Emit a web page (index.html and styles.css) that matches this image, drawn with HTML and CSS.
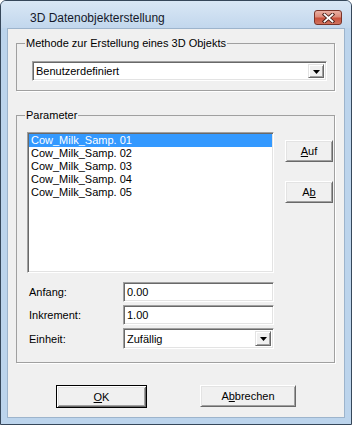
FILE: index.html
```html
<!DOCTYPE html>
<html lang="de">
<head>
    <meta charset="UTF-8">
    <meta name="viewport" content="width=device-width, initial-scale=1.0">
    <title>3D Datenobjekterstellung</title>
    <link rel="stylesheet" href="styles.css">
</head>
<body>
    <!-- Dialogfenster -->
    <div class="window">
        <div class="titlebar">
            <span class="title">3D Datenobjekterstellung</span>
            <button class="close" aria-label="Schließen">
                <svg width="13" height="10" viewBox="0 0 13 10">
                    <path d="M2.5 1.5 L10.5 8.5 M10.5 1.5 L2.5 8.5" stroke="#4a2019" stroke-width="3.6" stroke-linecap="square" fill="none"/>
                    <path d="M2.5 1.5 L10.5 8.5 M10.5 1.5 L2.5 8.5" stroke="#ffffff" stroke-width="1.8" stroke-linecap="square" fill="none"/>
                </svg>
            </button>
        </div>

        <div class="client">
            <!-- Methode -->
            <fieldset class="group group-method">
                <legend>Methode zur Erstellung eines 3D Objekts</legend>
                <div class="combo combo-method">
                    <span class="combo-text">Benutzerdefiniert</span>
                    <span class="drop">
                        <svg width="7" height="4" viewBox="0 0 7 4"><polygon points="0,0 7,0 3.5,4" fill="#000"/></svg>
                    </span>
                </div>
            </fieldset>

            <!-- Parameter -->
            <fieldset class="group group-params">
                <legend>Parameter</legend>
                <div class="list-row">
                    <ul class="listbox">
                        <li class="selected">Cow_Milk_Samp. 01</li>
                        <li>Cow_Milk_Samp. 02</li>
                        <li>Cow_Milk_Samp. 03</li>
                        <li>Cow_Milk_Samp. 04</li>
                        <li>Cow_Milk_Samp. 05</li>
                    </ul>
                    <div class="side-buttons">
                        <button class="btn btn-small"><u>A</u>uf</button>
                        <button class="btn btn-small">A<u>b</u></button>
                    </div>
                </div>

                <div class="fields">
                    <label>Anfang:</label>
                    <div class="edit">0.00</div>
                    <label>Inkrement:</label>
                    <div class="edit">1.00</div>
                    <label>Einheit:</label>
                    <div class="combo combo-unit">
                        <span class="combo-text">Zufällig</span>
                        <span class="drop">
                            <svg width="7" height="4" viewBox="0 0 7 4"><polygon points="0,0 7,0 3.5,4" fill="#000"/></svg>
                        </span>
                    </div>
                </div>
            </fieldset>

            <!-- Dialogschaltflächen -->
            <div class="dialog-buttons">
                <button class="btn btn-ok default"><u>O</u>K</button>
                <button class="btn btn-cancel">A<u>b</u>brechen</button>
            </div>
        </div>
    </div>
</body>
</html>
```

FILE: styles.css
```css
/* Grundstil */
* {
    box-sizing: border-box;
}
body {
    margin: 0;
    background: #ffffff;
    font-family: "Liberation Sans", Arial, sans-serif;
    font-size: 11px;
    color: #000;
}

/* Fensterrahmen */
.window {
    width: 352px;
    height: 425px;
    border: 1px solid #36475a;
    border-radius: 6px 6px 0 0;
    background: #bcd4ec;
    display: flex;
    flex-direction: column;
}
.titlebar {
    height: 27px;
    display: flex;
    align-items: flex-start;
    padding: 0 9px 0 29px;
    border-radius: 5px 5px 0 0;
    background: linear-gradient(#d9e7f5, #c2d7ed);
}
.title {
    flex: 1;
    margin-top: 10px;
    font-size: 12px;
    line-height: 14px;
    color: #14182a;
}
.close {
    margin-top: 9px;
    width: 28px;
    height: 15px;
    padding: 0;
    border: 1px solid #7a3328;
    border-radius: 3px;
    background: linear-gradient(#eab0a3 0%, #dc8b7a 45%, #c9503b 55%, #d0735f 100%);
    display: flex;
    align-items: center;
    justify-content: center;
}
.close svg {
    display: block;
}

/* Client-Bereich */
.client {
    flex: 1;
    margin: 0 6px 6px;
    border: 1px solid #9db4cc;
    background: #f0f0f0;
    padding-top: 8px;
}

/* Gruppenrahmen */
.group {
    margin: 0 9px 0 8px;
    padding: 0;
    width: 319px;
    min-width: 0;
    border: 1px solid #a0a0a0;
    box-shadow: 1px 1px 0 #ffffff;
}
.group legend {
    margin-left: 8px;
    padding: 0 1px;
    line-height: 13px;
}
.group-method {
    padding: 11px 0 9px;
}
.group-params {
    margin-top: 18px;
    padding: 10px 0 13px;
}

/* Eingabefelder (vertieft) */
.edit,
.combo,
.listbox {
    background: #ffffff;
    border: 1px solid;
    border-color: #a0a0a0 #ffffff #ffffff #a0a0a0;
    box-shadow: inset 1px 1px 0 #696969, inset -1px -1px 0 #e3e3e3;
}
.edit {
    height: 20px;
    padding: 0 3px;
    line-height: 18px;
}
.combo {
    display: flex;
    align-items: center;
    padding: 2px 2px 2px 3px;
}
.combo-text {
    flex: 1;
}
.combo-method {
    margin-left: 15px;
    width: 295px;
    height: 20px;
}
.combo-unit {
    height: 21px;
}
.drop {
    width: 16px;
    height: 100%;
    display: flex;
    align-items: center;
    justify-content: center;
    background: #f0f0f0;
    border: 1px solid;
    border-color: #e3e3e3 #696969 #696969 #e3e3e3;
    box-shadow: inset 1px 1px 0 #ffffff, inset -1px -1px 0 #a0a0a0;
}
.drop svg {
    display: block;
    margin-top: 1px;
}

/* Liste */
.list-row {
    display: flex;
    align-items: flex-start;
}
.listbox {
    list-style: none;
    margin: 0 0 0 10px;
    padding: 1px;
    width: 247px;
    height: 141px;
}
.listbox li {
    height: 13px;
    line-height: 13px;
    padding-left: 2px;
    white-space: nowrap;
}
.listbox li.selected {
    background: #3399ff;
    color: #ffffff;
}
.side-buttons {
    margin-left: 11px;
    padding-top: 8px;
    display: flex;
    flex-direction: column;
    gap: 19px;
}

/* Felder */
.fields {
    margin: 9px 0 0 12px;
    display: grid;
    grid-template-columns: 94px 151px;
    row-gap: 3px;
    align-items: center;
}

/* Schaltflächen */
.btn {
    font-family: "Liberation Sans", Arial, sans-serif;
    font-size: 11px;
    color: #000;
    background: #f0f0f0;
    padding: 0;
    border: 1px solid;
    border-color: #ffffff #696969 #696969 #ffffff;
    box-shadow: inset 1px 1px 0 #e3e3e3, inset -1px -1px 0 #a0a0a0;
}
.btn-small {
    width: 48px;
    height: 22px;
}
.btn.default {
    border: 1px solid #000;
    box-shadow: inset 1px 1px 0 #ffffff, inset -1px -1px 0 #696969,
        inset 2px 2px 0 #e3e3e3, inset -2px -2px 0 #a0a0a0;
}
.dialog-buttons {
    margin-top: 22px;
    padding-left: 48px;
    display: flex;
    align-items: flex-start;
}
.btn-ok {
    width: 91px;
    height: 23px;
}
.btn-cancel {
    margin-left: 53px;
    width: 96px;
    height: 22px;
}
```
